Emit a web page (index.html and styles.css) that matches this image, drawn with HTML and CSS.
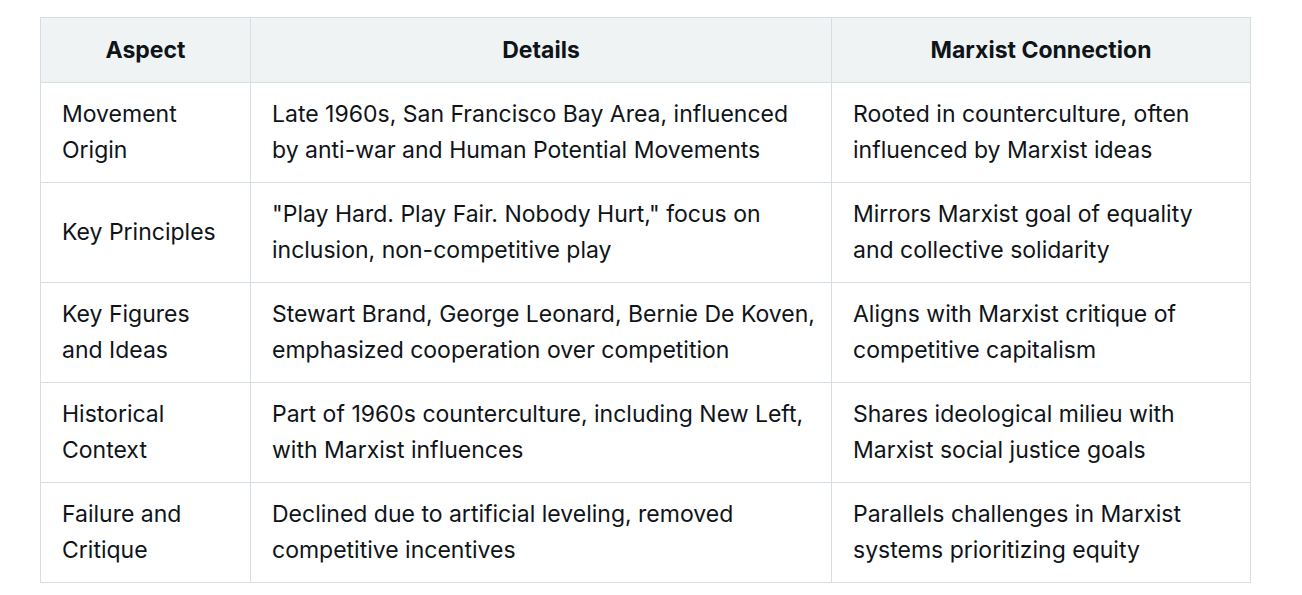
FILE: index.html
```html
<!DOCTYPE html>
<html>
<head>
<meta charset="utf-8">
<link rel="stylesheet" href="styles.css">
</head>
<body>
<div class="wrap">
<table class="grid">
<colgroup><col class="c1"><col class="c2"><col class="c3"></colgroup>
<thead>
<tr><th>Aspect</th><th>Details</th><th>Marxist Connection</th></tr>
</thead>
<tbody>
<tr><td>Movement Origin</td><td>Late 1960s, San Francisco Bay Area, influenced by anti-war and Human Potential Movements</td><td>Rooted in counterculture, often influenced by Marxist ideas</td></tr>
<tr><td>Key Principles</td><td>"Play Hard. Play Fair. Nobody Hurt," focus on inclusion, non-competitive play</td><td>Mirrors Marxist goal of equality and collective solidarity</td></tr>
<tr><td>Key Figures and Ideas</td><td>Stewart Brand, George Leonard, Bernie De Koven, emphasized cooperation over competition</td><td>Aligns with Marxist critique of competitive capitalism</td></tr>
<tr><td>Historical Context</td><td>Part of 1960s counterculture, including New Left, with Marxist influences</td><td>Shares ideological milieu with Marxist social justice goals</td></tr>
<tr><td>Failure and Critique</td><td>Declined due to artificial leveling, removed competitive incentives</td><td>Parallels challenges in Marxist systems prioritizing equity</td></tr>
</tbody>
</table>
</div>
</body>
</html>
```
FILE: styles.css
```css
html, body { margin: 0; padding: 0; background: #ffffff; }
body { font-family: Inter, "Noto Sans", sans-serif; color: #0f1419; }
.wrap { padding: 17px 0 0 40px; }
.grid { border-collapse: collapse; width: 1210px; table-layout: fixed; }
.c1 { width: 210px; }
.c2 { width: 581px; }
.c3 { width: 419px; }
.grid th, .grid td { border: 1px solid #d6dee3; font-size: 23px; line-height: 36px; text-align: left; vertical-align: middle; }
.grid th { background: #eff3f4; font-weight: 700; text-align: center; padding: 14px 21px; height: 36px; }
.grid td { padding: 13px 16px 14px 21px; height: 72px; }
```
